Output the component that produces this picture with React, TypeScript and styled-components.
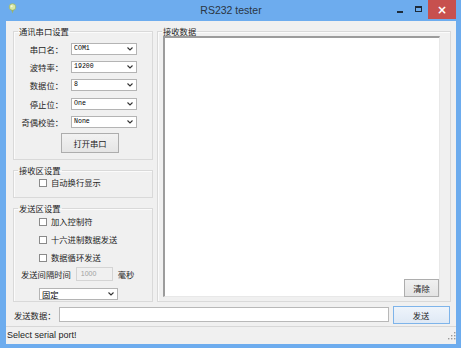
import React from 'react';
import styled, { createGlobalStyle } from 'styled-components';

const GlobalStyle = createGlobalStyle`
  html, body {
    margin: 0;
    padding: 0;
    background: #ffffff;
  }
  body {
    font-family: "Noto Sans CJK SC", "Noto Sans", sans-serif;
  }
`;

const cjk = `"Noto Sans CJK SC", "Noto Sans", sans-serif`;

function Chevron() {
  return (
    <svg width="6" height="4" viewBox="0 0 6 4">
      <path d="M0.5 0.5 L3 3 L5.5 0.5" fill="none" stroke="#333" strokeWidth="1.1" />
    </svg>
  );
}

function AppIcon() {
  return (
    <svg width="9" height="11" viewBox="0 0 9 11">
      <circle cx="4.5" cy="4" r="3.3" fill="#d9e8a8" stroke="#9bb56a" strokeWidth="0.8" />
      <path d="M3.3 7 L4.5 10.5 L5.7 7 Z" fill="#9bb56a" />
      <circle cx="3.6" cy="3.2" r="1" fill="#f4f9e0" />
    </svg>
  );
}

function SizeGrip() {
  const dots = [
    [8, 2],
    [5, 5],
    [8, 5],
    [2, 8],
    [5, 8],
    [8, 8],
  ];
  return (
    <svg width="10" height="10" viewBox="0 0 10 10">
      {dots.map(([x, y]) => (
        <rect key={`${x}-${y}`} x={x} y={y} width="1.4" height="1.4" fill="#9a9a9a" />
      ))}
    </svg>
  );
}

function Combo({ value, width, cjkText }: { value: string; width: number; cjkText?: boolean }) {
  return (
    <ComboBox $width={width}>
      <ComboValue $cjk={cjkText}>{value}</ComboValue>
      <ComboArrow>
        <Chevron />
      </ComboArrow>
    </ComboBox>
  );
}

function Check({ label }: { label: string }) {
  return (
    <CheckRow>
      <CheckBox />
      <CheckLabel>{label}</CheckLabel>
    </CheckRow>
  );
}

const portRows = [
  { label: '串口名：', value: 'COM1' },
  { label: '波特率：', value: '19200' },
  { label: '数据位：', value: '8' },
  { label: '停止位：', value: 'One' },
  { label: '奇偶校验：', value: 'None' },
];

function App() {
  return (
    <>
      <GlobalStyle />
      <Window>
        <TitleBar>
          <IconSlot>
            <AppIcon />
          </IconSlot>
          <Title>RS232 tester</Title>
          <CaptionButtons>
            <CaptionButton $width={18}>
              <MinGlyph />
            </CaptionButton>
            <CaptionButton $width={19}>
              <MaxGlyph />
            </CaptionButton>
            <CaptionButton $width={28} $close>
              <CloseGlyph>×</CloseGlyph>
            </CaptionButton>
          </CaptionButtons>
        </TitleBar>

        <Client>
          <Main>
            <LeftColumn>
              <GroupBox $height={134}>
                <Legend>通讯串口设置</Legend>
                <PortGrid>
                  {portRows.map((row) => (
                    <React.Fragment key={row.label}>
                      <FieldLabel>{row.label}</FieldLabel>
                      <Combo value={row.value} width={66} />
                    </React.Fragment>
                  ))}
                </PortGrid>
                <OpenButton>打开串口</OpenButton>
              </GroupBox>

              <GroupBox $height={33}>
                <Legend>接收区设置</Legend>
                <CheckList $top={2}>
                  <Check label="自动换行显示" />
                </CheckList>
              </GroupBox>

              <GroupBox $height={99}>
                <Legend>发送区设置</Legend>
                <CheckList $top={3}>
                  <Check label="加入控制符" />
                  <Check label="十六进制数据发送" />
                  <Check label="数据循环发送" />
                </CheckList>
                <IntervalRow>
                  <FieldLabel>发送间隔时间</FieldLabel>
                  <IntervalInput>1000</IntervalInput>
                  <FieldLabel>毫秒</FieldLabel>
                </IntervalRow>
                <ModeRow>
                  <Combo value="固定" width={79} cjkText />
                </ModeRow>
              </GroupBox>
            </LeftColumn>

            <ReceiveGroup>
              <Legend>接收数据</Legend>
              <ReceiveArea>
                <ReceiveText />
                <ClearButton>清除</ClearButton>
              </ReceiveArea>
            </ReceiveGroup>
          </Main>

          <SendRow>
            <FieldLabel>发送数据：</FieldLabel>
            <SendInput />
            <SendButton>发送</SendButton>
          </SendRow>

          <StatusBar>
            <StatusText>Select serial port!</StatusText>
            <SizeGrip />
          </StatusBar>
        </Client>
      </Window>
    </>
  );
}

export default App;

const Window = styled.div`
  width: 461px;
  height: 348px;
  box-sizing: border-box;
  padding: 0 5px 4px 6px;
  background: #6dacee;
  display: flex;
  flex-direction: column;
`;

const TitleBar = styled.div`
  height: 21px;
  flex: none;
  display: grid;
  grid-template-columns: 1fr auto 1fr;
  align-items: start;
`;

const IconSlot = styled.div`
  padding: 3px 0 0 2px;
  line-height: 0;
`;

const Title = styled.div`
  font-family: "Liberation Sans", Arial, sans-serif;
  font-size: 10.5px;
  line-height: 21px;
  color: #2a3542;
`;

const CaptionButtons = styled.div`
  justify-self: end;
  display: flex;
  align-items: flex-start;
`;

const CaptionButton = styled.div<{ $width: number; $close?: boolean }>`
  width: ${(p) => p.$width}px;
  height: 19px;
  display: flex;
  align-items: center;
  justify-content: center;
  background: ${(p) => (p.$close ? '#c7504e' : 'transparent')};
`;

const MinGlyph = styled.div`
  width: 6px;
  height: 2px;
  margin-top: 4px;
  background: #1d2b3a;
`;

const MaxGlyph = styled.div`
  width: 5px;
  height: 3px;
  border: 1px solid #1d2b3a;
  border-top-width: 2px;
  margin-top: -1px;
`;

const CloseGlyph = styled.span`
  font-family: "DejaVu Sans", sans-serif;
  font-size: 12px;
  font-weight: bold;
  line-height: 1;
  color: #ffffff;
`;

const Client = styled.div`
  flex: 1;
  background: #f0f0f0;
  display: flex;
  flex-direction: column;
  font-family: ${cjk};
  font-size: 8.3px;
  color: #1e1e1e;
`;

const Main = styled.div`
  height: 282px;
  box-sizing: border-box;
  padding: 5px 5px 0 7px;
  display: flex;
  gap: 4px;
`;

const LeftColumn = styled.div`
  width: 140px;
  flex: none;
  display: flex;
  flex-direction: column;
  gap: 5px;
`;

const GroupBox = styled.fieldset<{ $height: number }>`
  margin: 0;
  padding: 0;
  min-width: 0;
  height: ${(p) => p.$height}px;
  box-sizing: border-box;
  border: 1px solid #d9d9d9;
  box-shadow: inset 1px 1px 0 #fbfbfb;
`;

const Legend = styled.legend`
  margin-left: 4px;
  padding: 0 1px;
  font-size: 8.3px;
  line-height: 10px;
  color: #1e1e1e;
`;

const PortGrid = styled.div`
  margin-top: 7px;
  display: grid;
  grid-template-columns: 49px 66px;
  column-gap: 8px;
  row-gap: 6.2px;
  align-items: center;
`;

const FieldLabel = styled.span`
  font-size: 8.3px;
  line-height: 12px;
  text-align: right;
  white-space: nowrap;
  color: #1e1e1e;
`;

const ComboBox = styled.div<{ $width: number }>`
  width: ${(p) => p.$width}px;
  height: 12px;
  box-sizing: border-box;
  border: 1px solid #b4b4b4;
  background: #ffffff;
  display: flex;
  align-items: center;
  justify-content: space-between;
  padding: 0 3px 0 2px;
`;

const ComboValue = styled.span<{ $cjk?: boolean }>`
  font-family: ${(p) => (p.$cjk ? cjk : `"Liberation Mono", "Courier New", monospace`)};
  font-size: ${(p) => (p.$cjk ? '8.3px' : '6.6px')};
  line-height: 10px;
  color: #000;
`;

const ComboArrow = styled.span`
  line-height: 0;
`;

const OpenButton = styled.div`
  margin: 5px 0 0 47px;
  width: 58px;
  height: 20px;
  box-sizing: border-box;
  border: 1px solid #adadad;
  background: linear-gradient(#f2f2f2, #e5e5e5);
  display: flex;
  align-items: center;
  justify-content: center;
  font-size: 8.3px;
`;

const CheckList = styled.div<{ $top: number }>`
  margin-top: ${(p) => p.$top}px;
  padding-left: 25px;
  display: flex;
  flex-direction: column;
  gap: 7px;
`;

const CheckRow = styled.div`
  height: 11px;
  display: flex;
  align-items: center;
  gap: 4px;
`;

const CheckBox = styled.div`
  width: 8px;
  height: 8px;
  box-sizing: border-box;
  border: 1px solid #8a8a8a;
  background: #ffffff;
`;

const CheckLabel = styled.span`
  font-size: 8.3px;
  line-height: 11px;
`;

const IntervalRow = styled.div`
  margin-top: 4px;
  padding-left: 7px;
  display: flex;
  align-items: center;
  gap: 5px;
`;

const IntervalInput = styled.div`
  width: 37px;
  height: 14px;
  box-sizing: border-box;
  border: 1px solid #d4d4d4;
  background: #f0f0f0;
  padding-left: 4px;
  font-family: "Liberation Sans", Arial, sans-serif;
  font-size: 7px;
  line-height: 12px;
  color: #a0a0a0;
`;

const ModeRow = styled.div`
  margin-top: 7px;
  padding-left: 25px;
`;

const ReceiveGroup = styled.fieldset`
  flex: 1;
  margin: 0;
  padding: 0;
  min-width: 0;
  height: 276px;
  box-sizing: border-box;
  border: 1px solid #d9d9d9;
  box-shadow: inset 1px 1px 0 #fbfbfb;
`;

const ReceiveArea = styled.div`
  position: relative;
  margin-left: 5px;
  width: 277px;
  height: 261px;
`;

const ReceiveText = styled.div`
  width: 100%;
  height: 100%;
  box-sizing: border-box;
  background: #ffffff;
  border-top: 2px solid #9c9c9c;
  border-left: 2px solid #9c9c9c;
  border-right: 1px solid #e8e8e8;
  border-bottom: 1px solid #e8e8e8;
`;

const ClearButton = styled.div`
  position: absolute;
  right: 1px;
  bottom: 0;
  width: 35px;
  height: 18px;
  box-sizing: border-box;
  border: 1px solid #adadad;
  background: linear-gradient(#f0f0f0, #e3e3e3);
  display: flex;
  align-items: center;
  justify-content: center;
  font-size: 8.3px;
`;

const SendRow = styled.div`
  height: 23px;
  flex: none;
  padding-left: 8px;
  display: flex;
  align-items: center;
`;

const SendInput = styled.div`
  margin-left: 3px;
  width: 330px;
  height: 15px;
  box-sizing: border-box;
  border: 1px solid #b8b8b8;
  background: #ffffff;
`;

const SendButton = styled.div`
  margin-left: 4px;
  width: 57px;
  height: 18px;
  box-sizing: border-box;
  border: 1px solid #7eb4ea;
  background: linear-gradient(#eef4fb, #dfe9f5);
  display: flex;
  align-items: center;
  justify-content: center;
  font-size: 8.3px;
`;

const StatusBar = styled.div`
  height: 18px;
  flex: none;
  box-sizing: border-box;
  border-top: 1px solid #d7d7d7;
  padding: 0 0 1px 1px;
  display: flex;
  align-items: center;
  justify-content: space-between;
`;

const StatusText = styled.span`
  font-family: "Liberation Sans", Arial, sans-serif;
  font-size: 9px;
  color: #1e1e1e;
`;
